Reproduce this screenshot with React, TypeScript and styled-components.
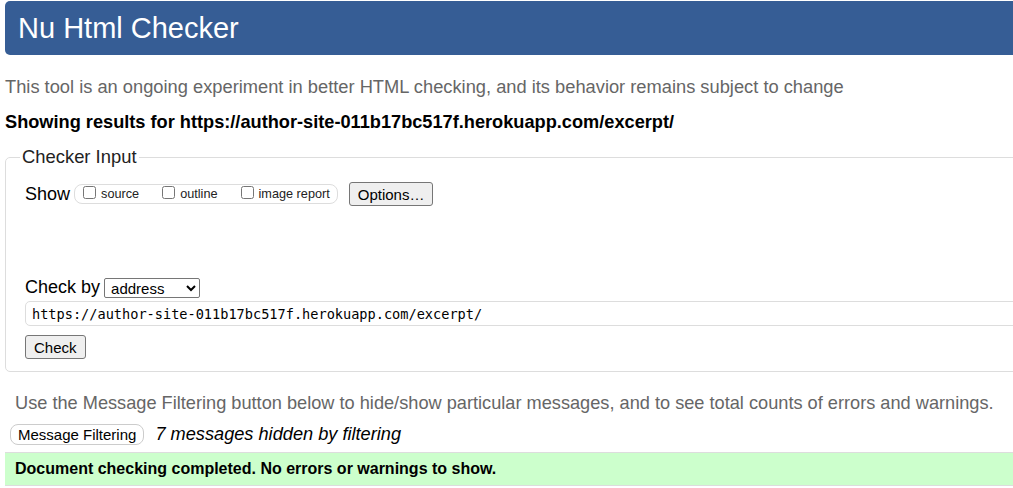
import React from 'react';
import styled, { createGlobalStyle } from 'styled-components';

const GlobalStyle = createGlobalStyle`
  html, body {
    margin: 0;
    padding: 0;
    background: #fff;
    overflow: hidden;
  }
  body {
    font-family: 'Liberation Sans', Arial, sans-serif;
    color: #000;
  }
`;

const Page = styled.div`
  width: 1040px;
  padding: 1px 0 0 5px;
`;

const Header = styled.h1`
  margin: 0;
  height: 54px;
  display: flex;
  align-items: center;
  padding: 0 13px;
  background: #365d95;
  color: #fff;
  font-size: 29px;
  font-weight: normal;
  border-radius: 5px;
`;

const Intro = styled.p`
  margin: 20px 0 0;
  color: #666;
  font-size: 18.3px;
  line-height: 24px;
`;

const Results = styled.p`
  margin: 11px 0 0;
  font-size: 18.2px;
  font-weight: bold;
  line-height: 24px;
`;

const Fieldset = styled.fieldset`
  margin: 12px 0 0;
  padding: 14px 0 12px 19px;
  border: 1px solid #ddd;
  border-radius: 5px;
  box-sizing: border-box;
  height: 226px;
`;

const Legend = styled.legend`
  padding: 0 2px;
  margin-left: -5px;
  font-size: 18.4px;
  color: #222;
`;

const Row = styled.div<{ $mt?: number }>`
  display: flex;
  align-items: center;
  margin-top: ${(p) => p.$mt ?? 0}px;
`;

const Label = styled.span`
  font-size: 18px;
  margin-right: 4px;
`;

const Pill = styled.div`
  display: flex;
  align-items: center;
  height: 18px;
  padding: 0 7px 0 8px;
  border: 1px solid #ddd;
  border-radius: 8px;
  gap: 23px;
`;

const Check = styled.label`
  display: flex;
  align-items: center;
  font-size: 12.7px;
  color: #222;

  input {
    margin: 0 5px 3px 0;
    width: 13px;
    height: 13px;
  }
`;

const Button = styled.button<{ $ml?: number }>`
  font-family: 'Liberation Sans', Arial, sans-serif;
  font-size: 15px;
  padding: 1px 8px;
  margin-left: ${(p) => p.$ml ?? 0}px;
  height: 24px;
  background: #efefef;
  border: 1px solid #767676;
  border-radius: 3px;
  color: #000;
`;

const Select = styled.select`
  font-family: 'Liberation Sans', Arial, sans-serif;
  font-size: 15px;
  width: 96px;
  height: 20px;
  border: 1px solid #767676;
  border-radius: 2px;
  background: #fff;
  padding: 0 2px;
`;

const UrlInput = styled.input`
  display: block;
  margin-top: 3px;
  width: 1000px;
  height: 25px;
  box-sizing: border-box;
  padding: 0 6px;
  border: 1px solid #ddd;
  border-radius: 5px;
  font-family: 'DejaVu Sans Mono', monospace;
  font-size: 13.6px;
  color: #000;
`;

const Note = styled.p`
  margin: 20px 0 0 10px;
  color: #666;
  font-size: 18.2px;
  line-height: 22px;
`;

const FilterRow = styled.div`
  display: flex;
  align-items: center;
  height: 22px;
  margin: 9px 0 0 5px;
  gap: 11px;
`;

const FilterButton = styled.button`
  font-family: 'Liberation Sans', Arial, sans-serif;
  font-size: 15px;
  height: 21px;
  padding: 0 7px;
  background: #fff;
  border: 1px solid #ccc;
  border-radius: 8px;
  color: #000;
`;

const Hidden = styled.em`
  font-size: 18.2px;
`;

const Success = styled.div`
  margin-top: 7px;
  height: 34px;
  display: flex;
  align-items: center;
  padding-left: 10px;
  background: #ccffcc;
  border-top: 1px solid #ddd;
  border-bottom: 1px solid #ddd;
  box-sizing: border-box;
  font-size: 16px;
  font-weight: bold;
`;

export default function App() {
  return (
    <Page>
      <GlobalStyle />
      <Header>Nu Html Checker</Header>
      <Intro>
        This tool is an ongoing experiment in better HTML checking, and its behavior remains subject to change
      </Intro>
      <Results>Showing results for https://author-site-011b17bc517f.herokuapp.com/excerpt/</Results>
      <Fieldset>
        <Legend>Checker Input</Legend>
        <Row>
          <Label>Show</Label>
          <Pill>
            <Check>
              <input type="checkbox" />
              source
            </Check>
            <Check>
              <input type="checkbox" />
              outline
            </Check>
            <Check>
              <input type="checkbox" />
              image report
            </Check>
          </Pill>
          <Button $ml={11}>Options…</Button>
        </Row>
        <Row $mt={71}>
          <Label>Check by</Label>
          <Select defaultValue="address">
            <option value="address">address</option>
          </Select>
        </Row>
        <UrlInput defaultValue="https://author-site-011b17bc517f.herokuapp.com/excerpt/" />
        <Row $mt={9}>
          <Button>Check</Button>
        </Row>
      </Fieldset>
      <Note>
        Use the Message Filtering button below to hide/show particular messages, and to see total counts of errors and warnings.
      </Note>
      <FilterRow>
        <FilterButton>Message Filtering</FilterButton>
        <Hidden>7 messages hidden by filtering</Hidden>
      </FilterRow>
      <Success>Document checking completed. No errors or warnings to show.</Success>
    </Page>
  );
}
